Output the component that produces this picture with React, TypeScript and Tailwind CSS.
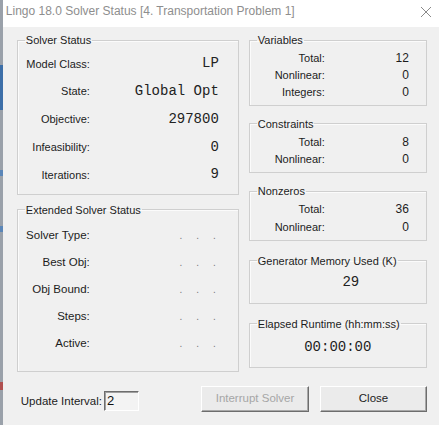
import React from 'react';

const sans = { fontFamily: '"Liberation Sans", Arial, sans-serif' };
const mono = { fontFamily: '"Liberation Mono", "Courier New", monospace' };

const Group = ({ title, className, children }: { title: string; className?: string; children: React.ReactNode }) => (
  <fieldset className={`border border-[#cfcfcf] shadow-[inset_1px_1px_0_#fbfbfb] ${className ?? ''}`}>
    <legend className="ml-[7px] px-[1px] text-[11px] leading-[14px] text-[#1c1c1c]">{title}</legend>
    {children}
  </fieldset>
);

const Dots = () => (
  <div className="flex justify-end gap-[14px] pr-[22px] text-[10px] text-[#7a7a7a]">
    <span>.</span>
    <span>.</span>
    <span>.</span>
  </div>
);

export default function App() {
  const solverRows = [
    { label: 'Model Class:', value: 'LP' },
    { label: 'State:', value: 'Global Opt' },
    { label: 'Objective:', value: '297800' },
    { label: 'Infeasibility:', value: '0' },
    { label: 'Iterations:', value: '9' },
  ];
  const extendedRows = ['Solver Type:', 'Best Obj:', 'Obj Bound:', 'Steps:', 'Active:'];

  const countGroups = [
    { title: 'Variables', rows: [['Total:', '12'], ['Nonlinear:', '0'], ['Integers:', '0']], mt: 'mt-0', rowH: 'h-[17px]', pb: 'pb-[4px]' },
    { title: 'Constraints', rows: [['Total:', '8'], ['Nonlinear:', '0']], mt: 'mt-[11px]', rowH: 'h-[17.5px]', pb: 'pb-[4px]' },
    { title: 'Nonzeros', rows: [['Total:', '36'], ['Nonlinear:', '0']], mt: 'mt-[11px]', rowH: 'h-[17.5px]', pb: 'pb-[4px]' },
  ];

  return (
    <div className="flex h-[425px] w-[439px] overflow-hidden bg-[#f0f0f0]" style={sans}>
      {/* window behind */}
      <div className="flex w-[3px] flex-col bg-[#9aa1aa]">
        <div className="mt-[65px] h-[45px] bg-[#3d6fa8]" />
        <div className="mt-[60px] h-[6px] bg-[#5b86b8]" />
        <div className="mt-[50px] h-[6px] bg-[#5b86b8]" />
        <div className="mt-[150px] h-[8px] bg-[#b05050]" />
      </div>

      <div className="flex flex-1 flex-col">
        {/* Title bar */}
        <div className="flex h-[27px] items-start justify-between bg-white pl-[3px] pr-[6px] pt-[3px]">
          <span className="text-[12px] leading-[16px] text-[#8e8e8e]">
            Lingo 18.0 Solver Status [4. Transportation Problem 1]
          </span>
          <svg width="12" height="12" viewBox="0 0 12 12" className="mr-[1px] mt-[3px]">
            <path d="M1 1 L11 11 M11 1 L1 11" stroke="#8a8a8a" strokeWidth="1" />
          </svg>
        </div>

        {/* Body */}
        <div className="flex flex-1 flex-col pl-[14px] pr-[12px] pt-[6px]">
          <div className="flex gap-[10px]">
            {/* Left column */}
            <div className="flex w-[222px] flex-col">
              <Group title="Solver Status" className="pb-[5px]">
                <div className="pt-[3px]">
                  {solverRows.map((r) => (
                    <div key={r.label} className="flex h-[27.75px] items-center">
                      <span className="w-[72px] text-right text-[11px] text-[#1c1c1c]">{r.label}</span>
                      <span className="flex-1 pr-[19px] text-right text-[14px] text-[#222]" style={mono}>
                        {r.value}
                      </span>
                    </div>
                  ))}
                </div>
              </Group>

              <Group title="Extended Solver Status" className="mt-[8px] pb-[14px]">
                <div className="pt-[5px]">
                  {extendedRows.map((l) => (
                    <div key={l} className="flex h-[27px] items-center">
                      <span className="w-[72px] text-right text-[11.5px] text-[#1c1c1c]">{l}</span>
                      <div className="flex-1">
                        <Dots />
                      </div>
                    </div>
                  ))}
                </div>
              </Group>
            </div>

            {/* Right column */}
            <div className="flex w-[178px] flex-col">
              {countGroups.map((g) => (
                <Group key={g.title} title={g.title} className={`${g.mt} ${g.pb}`}>
                  <div className="pt-[2.5px]">
                    {g.rows.map(([l, v]) => (
                      <div key={l} className={`flex ${g.rowH} items-center`}>
                        <span className="w-[75px] text-right text-[11px] text-[#1c1c1c]">{l}</span>
                        <span className="flex-1 pr-[17px] text-right text-[12px] text-[#1c1c1c]">{v}</span>
                      </div>
                    ))}
                  </div>
                </Group>
              ))}

              <Group title="Generator Memory Used (K)" className="mt-[13px] pb-[10px]">
                <div className="mt-[5px] flex h-[20px] items-center justify-center pl-[26px] text-[14px] text-[#222]" style={mono}>
                  29
                </div>
              </Group>

              <Group title="Elapsed Runtime (hh:mm:ss)" className="mt-[13px] pb-[9px]">
                <div className="mt-[7px] flex h-[20px] items-center justify-center text-[14px] text-[#222]" style={mono}>
                  00:00:00
                </div>
              </Group>
            </div>
          </div>

          {/* Bottom bar */}
          <div className="mt-[14px] flex items-start">
            <span className="ml-[4px] mt-[8px] whitespace-nowrap text-[11.5px] leading-[14px] text-[#1c1c1c]">
              Update Interval:
            </span>
            <div className="ml-[2px] mt-[5px] flex h-[20px] w-[35px] shrink-0 items-center border border-b-white border-l-[#6d6d6d] border-r-white border-t-[#6d6d6d] bg-[#f3f3f3] pl-[2px] text-[13px] text-[#111] shadow-[inset_1px_1px_0_#a0a0a0]">
              2
            </div>
            <button className="ml-[62px] h-[26px] w-[108px] shrink-0 border border-b-[#6d6d6d] border-l-white border-r-[#6d6d6d] border-t-white bg-[#ebebeb] text-[11.5px] text-[#a6a6a6] shadow-[inset_-1px_-1px_0_#a8a8a8]">
              Interrupt Solver
            </button>
            <button className="ml-[11px] h-[26px] w-[107px] shrink-0 border border-b-[#6d6d6d] border-l-white border-r-[#6d6d6d] border-t-white bg-[#ebebeb] text-[11.5px] text-[#1c1c1c] shadow-[inset_-1px_-1px_0_#a8a8a8]">
              Close
            </button>
          </div>
        </div>
      </div>
    </div>
  );
}
